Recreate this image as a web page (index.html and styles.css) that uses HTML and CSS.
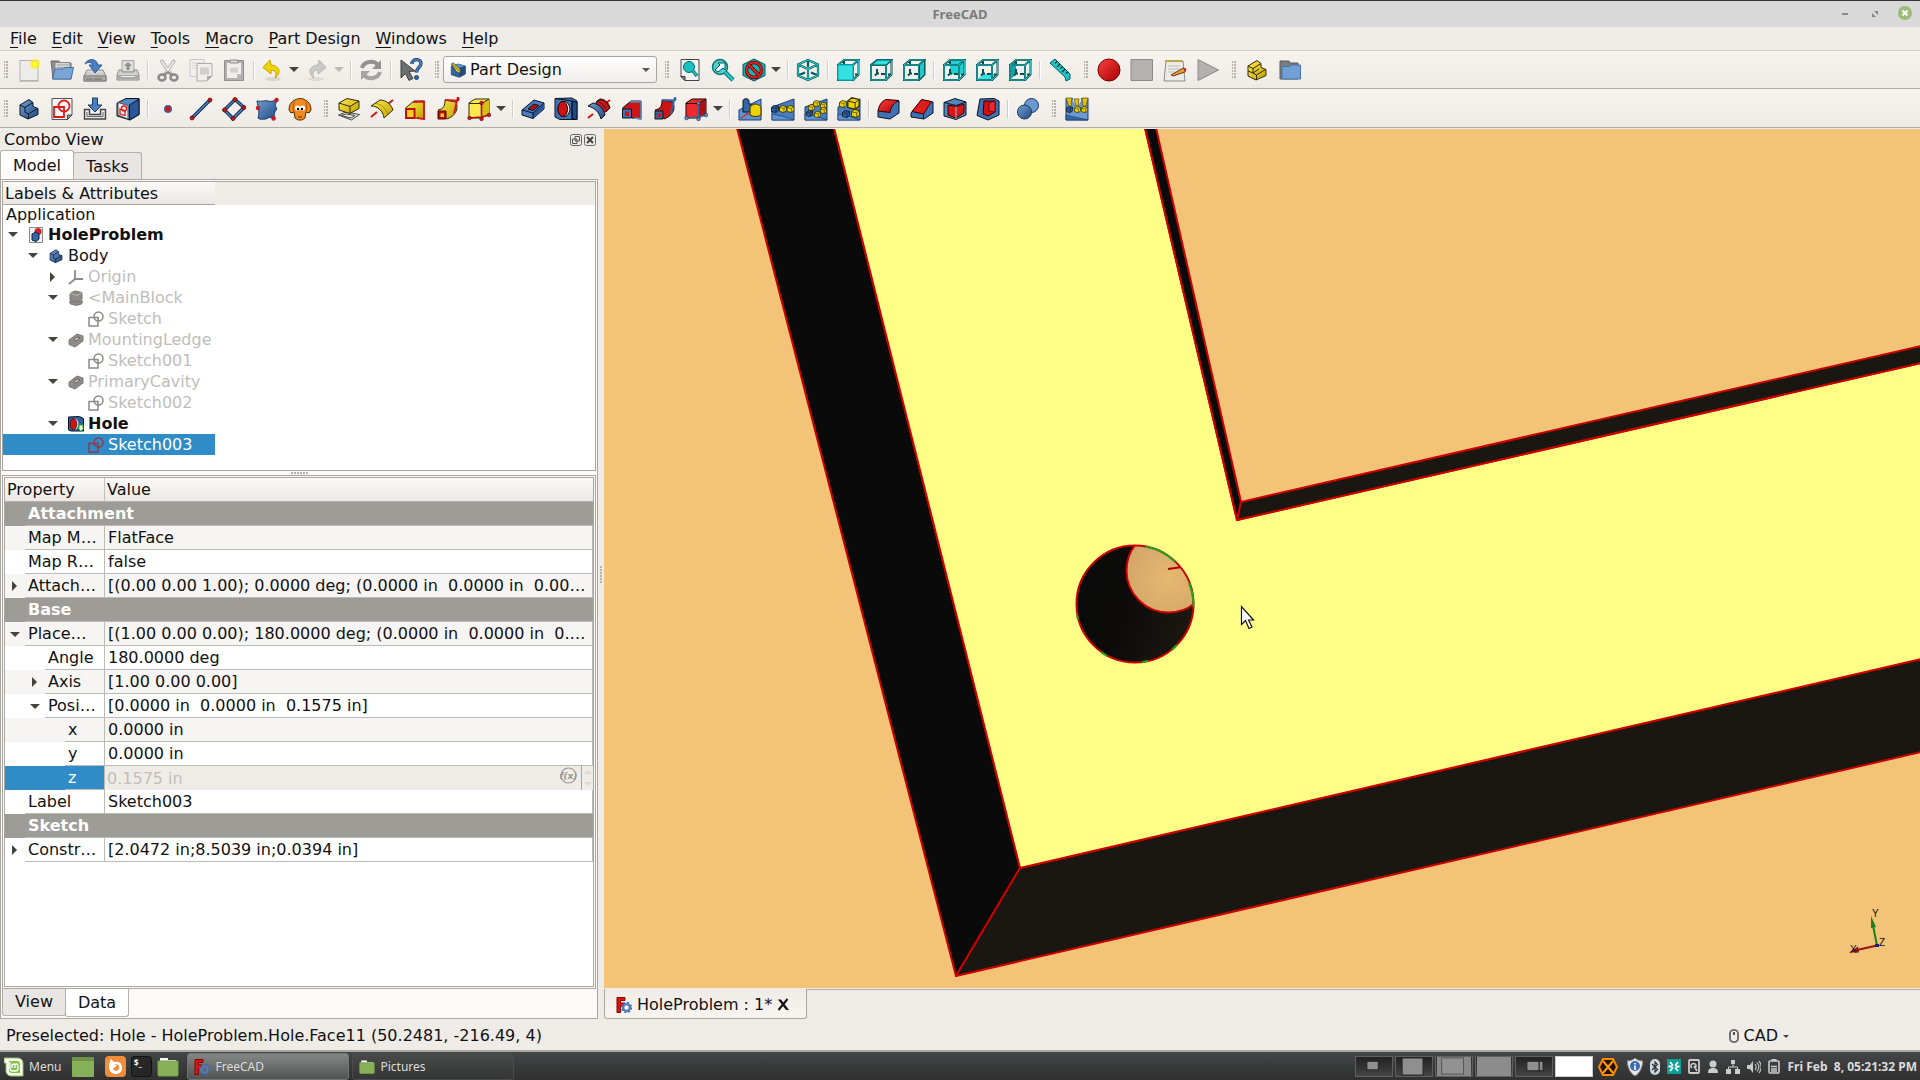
FILE: index.html
```html
<!DOCTYPE html>
<html lang="en">
<head>
<meta charset="utf-8">
<title>FreeCAD</title>
<link rel="stylesheet" href="styles.css">
</head>
<body>
<svg class="sprite" aria-hidden="true">
<defs>
<linearGradient id="gBlue" x1="0" y1="0" x2="1" y2="1"><stop offset="0" stop-color="#729fcf"/><stop offset="1" stop-color="#204a87"/></linearGradient>
<linearGradient id="gYel" x1="0" y1="0" x2="1" y2="1"><stop offset="0" stop-color="#fce94f"/><stop offset="1" stop-color="#c4a000"/></linearGradient>
<linearGradient id="gRed" x1="0" y1="0" x2="1" y2="1"><stop offset="0" stop-color="#ff4040"/><stop offset="1" stop-color="#a40000"/></linearGradient>
<linearGradient id="gGrey" x1="0" y1="0" x2="0" y2="1"><stop offset="0" stop-color="#e4e4e2"/><stop offset="1" stop-color="#9c9c9a"/></linearGradient>
<linearGradient id="gHole" x1="0" y1="0.4" x2="1" y2="0.7"><stop offset="0" stop-color="#0a0a0a"/><stop offset="0.4" stop-color="#0c0b0a"/><stop offset="1" stop-color="#1c1812"/></linearGradient>
<radialGradient id="gInner" cx="0.5" cy="0.6" r="0.6"><stop offset="0" stop-color="#e6b870"/><stop offset="1" stop-color="#d0a468"/></radialGradient>
<radialGradient id="gStar"><stop offset="0" stop-color="#fffbb0"/><stop offset="0.45" stop-color="#fff200"/><stop offset="1" stop-color="#fff200" stop-opacity="0"/></radialGradient>
</defs>

<symbol id="i-new" viewBox="0 0 24 24"><path d="M3 2.500h18v20H3z" fill="#ececea" stroke="#b4b3ae"/><path d="M2 23.500h20" stroke="#c8c4bc"/><circle cx="18" cy="6" r="6" fill="url(#gStar)"/></symbol>
<symbol id="i-open" viewBox="0 0 24 24"><path d="M1 3h8l1 2h11v16H3z" fill="#8c8c8a" stroke="#6d6d6b"/><path d="M5 4.500h15v9H5z" fill="#d8d8d6" stroke="#8a8a88"/><path d="M7 7h12M7 9.500h12" stroke="#a0a09e"/><path d="M5 11h8l2-1.500h8.500L21 21H2.500z" fill="#7aa5d6" stroke="#4070a8"/></symbol>
<symbol id="i-save" viewBox="0 0 24 24"><path d="M4 12h16l3 6v5H1v-5z" fill="url(#gGrey)" stroke="#8a8a88"/><path d="M1 18h22v5H1z" fill="#aaa9a5" stroke="#7d7d7a"/><path d="M3 21h7M12 20v2M14 20v2M16 20v2M18 20v2" stroke="#6a6a68"/><path d="M2 6C4 1 13-1 15 7h4l-7 8-6-8h3.500C9.500 4 5 3.500 2 6z" fill="#4b7fc0" stroke="#2c5a96"/></symbol>
<symbol id="i-print" viewBox="0 0 24 24"><path d="M6 2.500h12V14H6z" fill="#dededc" stroke="#a5a5a2"/><path d="M12 4l4 4h-2.500v4h-3V8H8z" fill="#8d8d8b"/><path d="M3 12h3v2h12v-2h3l2 5v5H1v-5z" fill="#d4d3d0" stroke="#8a8a88"/><path d="M1 17h22v4H1z" fill="#aaa9a6"/><path d="M5 18.500h14" stroke="#eee"/></symbol>
<symbol id="i-cut" viewBox="0 0 24 24" fill="none"><path d="M5 2l9 13 2 2M18.500 2L10 15l-2 2" stroke="#b5b4b1" stroke-width="3.500"/><path d="M5.500 3L15 16M18 3L9 16" stroke="#eeedeb" stroke-width="1.500"/><ellipse cx="6" cy="19.500" rx="3.500" ry="3" stroke="#8b8a88" stroke-width="2.500"/><ellipse cx="18" cy="19.500" rx="3.500" ry="3" stroke="#8b8a88" stroke-width="2.500"/><path d="M8 17l4-3 4 3" stroke="#8b8a88" stroke-width="2"/></symbol>
<symbol id="i-copy" viewBox="0 0 24 24"><path d="M1 1.500h14v17H1z" fill="#f1f0ee" stroke="#c9c8c5"/><path d="M3 5h10M3 7.500h10M3 10h5" stroke="#d6d5d2"/><path d="M8 5.500h15V18l-5 5H8z" fill="#efeeec" stroke="#aeada9"/><path d="M11 9.500h9v7h-9z" fill="#cfceca"/><path d="M23 18h-5v5z" fill="#aaa9a5"/></symbol>
<symbol id="i-paste" viewBox="0 0 24 24"><path d="M2.500 2.500h19v20h-19z" fill="#b1b0ac" stroke="#918f8c"/><path d="M5 5h14v11l-4 4H5z" fill="#f0efec"/><path d="M8 2h8v3H8z" fill="#dcdbd8" stroke="#8a8986"/><path d="M8 9.500h8v5H8z" fill="#d3d2cf"/><path d="M19 16h-4v4z" fill="#bbbab6"/></symbol>
<symbol id="i-undo" viewBox="0 0 24 24"><ellipse cx="13" cy="21" rx="8" ry="2" fill="#d9d5cd"/><path d="M10 2L3 9.500l8 6.500v-4c5 0 6 3 4 8 6-4 6-12-4-13z" fill="#edd400" stroke="#c4a000"/></symbol>
<symbol id="i-redo" viewBox="0 0 24 24"><ellipse cx="11" cy="21" rx="8" ry="2" fill="#dedad4"/><path d="M14 2l7 7.500-8 6.500v-4c-5 0-6 3-4 8-6-4-6-12 4-13z" fill="#cbcac6" stroke="#b5b4b0"/></symbol>
<symbol id="i-refresh" viewBox="0 0 24 24" fill="none"><path d="M3 10c2-7 12-8 16-3" stroke="#929190" stroke-width="4"/><path d="M22 2v9h-9z" fill="#929190"/><path d="M21 14c-2 7-12 8-16 3" stroke="#a4a3a0" stroke-width="4"/><path d="M2 22v-9h9z" fill="#a4a3a0"/></symbol>
<symbol id="i-what" viewBox="0 0 24 24"><path d="M2 2l14 11-6 .5 4 7-4 2-3.500-7L2 20z" fill="#6c6f70" stroke="#3d4041"/><path d="M13 6c0-6 9-5.500 9-.5 0 4-4.500 3.500-4.500 9" fill="none" stroke="#1f3f6d" stroke-width="3.400"/><path d="M13 6c0-6 9-5.500 9-.5 0 4-4.500 3.500-4.500 9" fill="none" stroke="#4c7fbf" stroke-width="1.800"/><circle cx="17.500" cy="19.500" r="2" fill="#3465a4" stroke="#1f3f6d"/></symbol>
<symbol id="i-pd" viewBox="0 0 24 24"><path d="M2 6l10-3 11 3v12l-9 5-12-4z" fill="#3465a4" stroke="#16335c"/><path d="M2 6l12 3 9-3-11-3z" fill="#5e8fc9"/><path d="M14 9l9-3v12l-9 5z" fill="#204a87"/><path d="M2 3l3-2 10 10 1 6-6-2z" fill="#e8d020" stroke="#333"/><path d="M3 2l11 12" stroke="#333" fill="none"/></symbol>

<symbol id="i-fitall" viewBox="0 0 24 24"><path d="M3 1.500h18v21H7l-4-4z" fill="#f1f1f0" stroke="#444"/><path d="M3 18.500h4v4z" fill="#999" stroke="#333"/><circle cx="11" cy="9" r="5.500" fill="#18c0c2" stroke="#06686a"/><path d="M15 13l4 5" stroke="#06686a" stroke-width="3.500"/><path d="M15 13l4 5" stroke="#20cfd1" stroke-width="1.500"/></symbol>
<symbol id="i-fitsel" viewBox="0 0 24 24"><circle cx="9" cy="9" r="7.500" fill="#5cc9ca" stroke="#06787a" stroke-width="1.500"/><path d="M14 14l8 8" stroke="#06686a" stroke-width="4.500"/><path d="M14 14l8 8" stroke="#20cfd1" stroke-width="2.400"/><path d="M4 12l5-5-2-2h7v7l-2-2-5 4z" fill="#e8ffff" stroke="#055"/></symbol>
<symbol id="i-style" viewBox="0 0 24 24"><path d="M1 6.500L12 1l11 5.500v11L12 23 1 17.500z" fill="#17b3b5" stroke="#055" /><circle cx="12" cy="12" r="7.500" fill="none" stroke="#500" stroke-width="3.400"/><circle cx="12" cy="12" r="7.500" fill="none" stroke="#e02020" stroke-width="2"/><path d="M7 7l10 10" stroke="#500" stroke-width="3.600"/><path d="M6.500 6.500l11 11" stroke="#e02020" stroke-width="2.200"/></symbol>
<symbol id="i-iso" viewBox="0 0 24 24" fill="none"><path d="M2 6.500L12 2l10 4.500v11L12 22 2 17.500zM2 6.500l10 4.500 10-4.500M12 11v11M12 2v7M2 17.500l7-3M22 17.500l-7-3" stroke="#065a5b" stroke-width="2.200"/><path d="M2 6.500L12 2l10 4.500v11L12 22 2 17.500zM2 6.500l10 4.500 10-4.500M12 11v11" stroke="#2fd5d7" stroke-width="1"/></symbol>
<symbol id="cube" viewBox="0 0 24 24" fill="none"><path d="M2 7h15v15H2zM2 7l6-5h14.500l-5.500 5M22.500 2v14.500L17 22M8 2v5M8 11v4.500l-2 2M12 16h4M19 16.500h3.500M8 15.500h2" stroke="#074f50" stroke-width="2"/><path d="M2 7h15v15H2zM2 7l6-5h14.500l-5.500 5M22.500 2v14.500L17 22" stroke="#2bc9cb" stroke-width="0.900"/></symbol>
<symbol id="i-front" viewBox="0 0 24 24"><use href="#cube"/><path d="M2 7h15v15H2z" fill="#34e0e2" stroke="#0aa"/></symbol>
<symbol id="i-top" viewBox="0 0 24 24"><use href="#cube"/><path d="M2.500 7l6-5h14L17 7z" fill="#34e0e2" stroke="#055"/></symbol>
<symbol id="i-right" viewBox="0 0 24 24"><use href="#cube"/><path d="M17.500 7l5-5v14.500l-5 5z" fill="#1fc9cb" stroke="#055"/></symbol>
<symbol id="i-rear" viewBox="0 0 24 24"><path d="M8 2.500h14v14H8z" fill="#1fd0d2"/><use href="#cube"/></symbol>
<symbol id="i-bottom" viewBox="0 0 24 24"><path d="M2 22l6-6h14.500L17 22z" fill="#34e0e2"/><use href="#cube"/></symbol>
<symbol id="i-left" viewBox="0 0 24 24"><path d="M2 7l6-5v14l-6 6z" fill="#12a5a7"/><use href="#cube"/></symbol>
<symbol id="i-measure" viewBox="0 0 24 24"><path d="M2 5l5-4 15 15v5l-4 2-1-4z" fill="#1fc4c6" stroke="#055a5b"/><path d="M9 3.500l-2 2M12 6l-3 3M14.500 8.500l-2 2M17 11l-3 3M20 13.500l-2 2" stroke="#033" stroke-width="1.200"/></symbol>
<symbol id="i-rec" viewBox="0 0 24 24"><circle cx="12" cy="12" r="11" fill="url(#gRed)" stroke="#6e0000"/></symbol>
<symbol id="i-stop" viewBox="0 0 24 24"><path d="M1 1.500h21.500v21H1z" fill="#b5b1ae" stroke="#8c8986"/></symbol>
<symbol id="i-edit" viewBox="0 0 24 24"><path d="M3 3h17l2 20H1z" fill="#ecebe8" stroke="#8d8b86"/><path d="M3 2v2M5.500 2v2M8 2v2M10.500 2v2M13 2v2M15.500 2v2M18 2v2" stroke="#b59a10" stroke-width="1.600"/><path d="M5 8h12M5 11h12M5 14h7" stroke="#bbb"/><path d="M8 17l12-7 3 1-1 3-12 4z" fill="#e09a3a" stroke="#6b4010"/><path d="M20 10l3 1-1 3z" fill="#d22"/></symbol>
<symbol id="i-play" viewBox="0 0 24 24"><path d="M2 1.500L22.500 12 2 22.500z" fill="#b5b1ae" stroke="#8c8986"/></symbol>
<symbol id="i-part" viewBox="0 0 24 24"><path d="M3 8l9-5.500 4 3v4l5 2v6L11 22l-8-4z" fill="url(#gYel)" stroke="#302b00"/><path d="M3 8l5 2.500 8-5M8 10.500v4.500l3.500 2 9-5.500M11.500 17v5M3 13l5 2 6-4" fill="none" stroke="#302b00"/></symbol>
<symbol id="i-group" viewBox="0 0 24 24"><path d="M2 3h9l1 2h8v16H2z" fill="#7b7d7c" stroke="#5a5b5a"/><path d="M4 8.500h7L13 7h9.500v14H4z" fill="#72a0d6" stroke="#4472aa"/></symbol>

<symbol id="i-body" viewBox="0 0 24 24"><path d="M3 8l9-5.500 4 3v4l5 2v6L11 22l-8-4z" fill="url(#gBlue)" stroke="#0b1521"/><path d="M3 8l5 2.500 8-5M8 10.500v4.500l3.500 2 9-5.500M11.500 17v5" fill="none" stroke="#0b1521"/></symbol>
<symbol id="i-sketch" viewBox="0 0 24 24"><path d="M2 1.500h20V18l-4.500 4.500H2z" fill="#f6f6f5" stroke="#555"/><path d="M22 18h-4.500v4.500z" fill="#999" stroke="#444"/><path d="M4 10h10v10H4z" fill="none" stroke="#e01b1b" stroke-width="1.800"/><circle cx="14" cy="9" r="5.500" fill="none" stroke="#e01b1b" stroke-width="1.800"/></symbol>
<symbol id="i-attach" viewBox="0 0 24 24"><path d="M1.500 12.500h5v5h11v-5h5V22h-21z" fill="#e8e8e8" stroke="#444" stroke-width="1.400"/><path d="M4 15v4.500h16V15" fill="none" stroke="#666"/><path d="M9.500 1h5v7H19l-7 7-7-7h4.500z" fill="#4b7fc0" stroke="#173a68"/></symbol>
<symbol id="i-map" viewBox="0 0 24 24"><path d="M1 6l9-4.500h13v16L14 23 1 19z" fill="#5286c4" stroke="#0b1521"/><path d="M13.500 8L23 2v15.500l-9.500 5.500z" fill="#2a579a" stroke="#0b1521"/><path d="M2 5.500l10 3V22L2 18z" fill="#eee" stroke="#555"/><path d="M4 12l5 1.500v5L4 17z" fill="none" stroke="#e01b1b" stroke-width="1.300"/><circle cx="8" cy="11.500" r="2.500" fill="none" stroke="#e01b1b" stroke-width="1.300"/></symbol>
<symbol id="i-point" viewBox="0 0 24 24"><circle cx="12" cy="12" r="4" fill="#3465a4"/><circle cx="12" cy="12" r="2.700" fill="#d01818"/></symbol>
<symbol id="i-line" viewBox="0 0 24 24"><path d="M3 21L21 3" stroke="#0b2545" stroke-width="3.400"/><path d="M3 21L21 3" stroke="#4d82c4" stroke-width="1.600"/><g fill="#d01818" stroke="#5c0000" stroke-width=".7"><circle cx="3" cy="21" r="2"/><circle cx="21" cy="3" r="2"/></g></symbol>
<symbol id="i-plane" viewBox="0 0 24 24"><path d="M2.500 13L13 2.500l9 8L11 21.500z" fill="none" stroke="#0b2545" stroke-width="3.400"/><path d="M2.500 13L13 2.500l9 8L11 21.500z" fill="none" stroke="#4d82c4" stroke-width="1.600"/><g fill="#d01818" stroke="#5c0000" stroke-width=".7"><circle cx="2.500" cy="13" r="2"/><circle cx="13" cy="2.500" r="2"/><circle cx="22" cy="10.500" r="2"/><circle cx="11" cy="21.500" r="2"/></g></symbol>
<symbol id="i-shape" viewBox="0 0 24 24"><path d="M2 4c5 1 8-1 11 0s5 0 9-1c-2 5-2 6 0 9-3 3-3 5-2 10-4-2-6-2-9 0-3 0-6 1-8-1 2-6 0-11-1-17z" fill="url(#gBlue)" stroke="#173a68"/><g fill="#d01818"><circle cx="21.500" cy="3" r="2.200"/><circle cx="3" cy="11" r="2.200"/><circle cx="18.500" cy="21.500" r="2.200"/></g></symbol>
<symbol id="i-clone" viewBox="0 0 24 24"><path d="M7 3c3-2 8-2 10 0 3 1 6 4 6 10l-2 3-3-1-1 6-3 2h-4l-3-2-1-6-3 1-2-3C1 7 4 4 7 3z" fill="#ef8a1f" stroke="#5a2c00"/><path d="M6 5c-1 3-1 7 0 10M18 5c1 3 1 7 0 10" fill="none" stroke="#a85508"/><circle cx="9.500" cy="11" r="2.600" fill="#fff"/><circle cx="14.500" cy="11" r="2.600" fill="#fff"/><circle cx="10" cy="12" r="1.200"/><circle cx="14" cy="12" r="1.200"/><path d="M10 20h4" stroke="#5a2c00"/></symbol>

<symbol id="i-pad" viewBox="0 0 24 24"><path d="M1.500 18L9 15l13.500 2.500-8 5.500z" fill="#e8e8e6" stroke="#444"/><path d="M4 18.500l5-1.500 9 1.500-4 2.500z" fill="none" stroke="#444"/><path d="M2 6l8-4.500L22 4v7.500l-9 5L2 13z" fill="url(#gYel)" stroke="#302b00"/><path d="M2 6l11 3.500L22 4M13 9.500v7" fill="none" stroke="#302b00"/></symbol>
<symbol id="i-rev" viewBox="0 0 24 24"><path d="M1 20l6-5M18 7l5-4" stroke="#d01818" stroke-width="2"/><path d="M1 9l9-6c6 0 11 4 13 10l-9 8C13 14 8 9 1 9z" fill="url(#gYel)" stroke="#302b00"/><path d="M5 6.500c6 0 11 5 13 11" fill="none" stroke="#7a6a00" stroke-width=".6"/></symbol>
<symbol id="i-loft" viewBox="0 0 24 24"><path d="M2.500 11L11 4h10v18l-9-1z" fill="url(#gYel)" stroke="#302b00"/><path d="M10 5l11-.500V22l-7-1" fill="none" stroke="#d01818" stroke-width="1.800"/><path d="M3 12h8.500v9H3z" fill="#f5d020" stroke="#c01010" stroke-width="2"/></symbol>
<symbol id="i-sweep" viewBox="0 0 24 24"><path d="M2 13C8 12 9 8 9 3l11 2c3 8-1 14-9 17z" fill="url(#gYel)" stroke="#302b00"/><path d="M9 3l12 .5-3 13" fill="none" stroke="#d01818" stroke-width="1.800"/><path d="M2 14h8v8H2z" fill="#b01010" stroke="#600"/><path d="M4.500 16.500h3.500V20H4.500z" fill="#f5d020"/><ellipse cx="22" cy="2" rx="1.500" ry="2.300" fill="#c01010"/></symbol>
<symbol id="i-cubeY" viewBox="0 0 24 24"><path d="M2 6l6-4h14v14l-7 5H2z" fill="#fce94f" stroke="#302b00"/><path d="M15 7l7-5v14l-7 5z" fill="#d8bd14"/><path d="M2 6.500h12.500L22 2" fill="none" stroke="#302b00"/><path d="M14.500 6v13M2 21l12.500-1 8-2" fill="none" stroke="#b01010" stroke-width="1.600"/><g fill="#d01818" stroke="#500" stroke-width=".6"><circle cx="14.500" cy="6" r="1.800"/><circle cx="2.500" cy="21" r="1.800"/><circle cx="14.500" cy="22" r="1.800"/><circle cx="22" cy="18" r="1.800"/></g></symbol>
<symbol id="i-pocket" viewBox="0 0 24 24"><path d="M1 13L13 3l10 3v6L12 21.500 1 18z" fill="#4a7dbd" stroke="#0b1521"/><path d="M12 16L23 6v6l-11 9.500z" fill="#2a579a"/><path d="M1 13l11 3L23 6M12 16v5.500" fill="none" stroke="#0b1521"/><path d="M7 12l6-5 5 1.500-6 5z" fill="#b01010" stroke="#0b1521"/></symbol>
<symbol id="i-hole" viewBox="0 0 24 24"><path d="M1 1.500l17-.5 5 3v18.500H6L1 20z" fill="#3f72b4" stroke="#0b1521"/><path d="M18 4l5 1v17.500l-5-1z" fill="#204a87" stroke="#0b1521"/><path d="M1 1.500L18 4v17.500" fill="none" stroke="#0b1521"/><ellipse cx="10" cy="12" rx="6" ry="7.500" fill="#e8e8e8" stroke="#200"/><ellipse cx="8.700" cy="12" rx="4.800" ry="7.500" fill="#cc1414" stroke="#200"/></symbol>
<symbol id="i-groove" viewBox="0 0 24 24"><path d="M1 21l5-4M19 6l4-3" stroke="#d01818" stroke-width="2"/><path d="M9 5l4-3c5 0 9 4 10 9l-4 4c-4 0-9-4-10-10z" fill="#cc1414" stroke="#400"/><path d="M1 9l5-3c6 1 11 6 12 12l-4 4C12 15 8 11 1 9z" fill="url(#gBlue)" stroke="#0b1521"/><path d="M10 4l3-1.500c5 1 8 4 9.500 9L20 14c-2-5-5-8-10-10z" fill="none" stroke="#0b1521" stroke-width=".7"/></symbol>
<symbol id="i-loftR" viewBox="0 0 24 24"><path d="M2.500 11L11 4h10v18l-9-1z" fill="#cc1414" stroke="#111"/><path d="M10 5l11-.500V22l-7-1" fill="none" stroke="#5e8fc9" stroke-width="1.500"/><path d="M2.500 12H11.500v9H2.500z" fill="#3f72b4" stroke="#0b1521"/><path d="M5 14.500h4v4.500H5z" fill="#cc1414"/></symbol>
<symbol id="i-sweepR" viewBox="0 0 24 24"><path d="M2 13C8 12 9 8 9 3l11 2c3 8-1 14-9 17z" fill="#cc1414" stroke="#111"/><path d="M9 3l12 .5-3 13" fill="none" stroke="#3465a4" stroke-width="2"/><path d="M2 14h8v8H2z" fill="#3465a4" stroke="#0b1521"/><path d="M4.500 16.500h3.500V20H4.500z" fill="#cc1414"/><ellipse cx="22" cy="2" rx="1.500" ry="2" fill="#3465a4"/></symbol>
<symbol id="i-cubeR" viewBox="0 0 24 24"><path d="M2 6l6-4h14v14l-7 5H2z" fill="#ef2929" stroke="#200"/><path d="M15 7l7-5v14l-7 5z" fill="#b01010"/><path d="M2 6.500h12.500L22 2" fill="none" stroke="#200"/><path d="M14.500 6v13M2 21l12.500-1 8-2" fill="none" stroke="#3465a4" stroke-width="1.600"/><g fill="#5e8fc9" stroke="#0b2545" stroke-width=".6"><circle cx="14.500" cy="6" r="1.800"/><circle cx="2.500" cy="21" r="1.800"/><circle cx="14.500" cy="22" r="1.800"/><circle cx="22" cy="18" r="1.800"/></g></symbol>

<symbol id="yb" viewBox="0 0 8 8"><path d="M.5 2.500L3 .5l4.500 1v4L5 7.500l-4.500-1z" fill="#edd400" stroke="#302b00" stroke-width=".8"/><path d="M.5 2.500L5 3.500l2.500-2M5 3.500v4" fill="none" stroke="#302b00" stroke-width=".6"/></symbol>
<symbol id="bb" viewBox="0 0 8 8"><path d="M.5 2.500L3 .5l4.500 1v4L5 7.500l-4.500-1z" fill="#2f5f9f" stroke="#0b1521" stroke-width=".8"/><path d="M.5 2.500L5 3.500l2.500-2M5 3.500v4" fill="none" stroke="#0b1521" stroke-width=".6"/></symbol>
<symbol id="ground" viewBox="0 0 24 24"><path d="M1 10l22-8v21H1z" fill="#4a7dbd" stroke="#1a3f70"/><path d="M1 17l10 2 12 4H1z" fill="#5f93d2" stroke="#1a3f70" stroke-width=".7"/></symbol>
<symbol id="i-mirror" viewBox="0 0 24 24"><path d="M1 13l22-11v21H1z" fill="#5f93d2" stroke="#1a3f70"/><path d="M5 4c0-3 6-3 6 0v3h2v8H5z" fill="#3465a4" stroke="#0b1521"/><path d="M12 11c0-2 3-4 5.500-4s5.500 2 5.500 4v7c-2 2-9 2-11 0z" fill="#edd400" stroke="#302b00"/><path d="M3 21l9-6" stroke="#d01818" stroke-width="1.500" stroke-dasharray="2 1"/></symbol>
<symbol id="i-linear" viewBox="0 0 24 24"><use href="#ground"/><use href="#bb" x="0" y="8" width="8" height="8"/><use href="#yb" x="8" y="8" width="8" height="8"/><use href="#yb" x="15.500" y="8" width="8" height="8"/></symbol>
<symbol id="i-polar" viewBox="0 0 24 24"><use href="#ground"/><use href="#bb" x="2" y="13" width="7" height="7"/><use href="#yb" x="4" y="7" width="7" height="7"/><use href="#yb" x="9" y="3" width="7" height="7"/><use href="#yb" x="16" y="5" width="7" height="7"/><use href="#yb" x="16" y="10" width="7" height="7"/><use href="#yb" x="10" y="14" width="7" height="7"/></symbol>
<symbol id="i-multi" viewBox="0 0 24 24"><use href="#ground"/><use href="#yb" x="10" y="0" width="13" height="13"/><use href="#yb" x="2" y="3" width="8" height="8"/><use href="#bb" x="5" y="13" width="8" height="8"/><use href="#yb" x="14" y="12" width="9" height="9"/></symbol>
<symbol id="i-fillet" viewBox="0 0 24 24"><path d="M1 14L9 3l13 1v12l-9 6-12-2z" fill="#3f72b4" stroke="#0b1521"/><path d="M1 14C2 8 5 4 9 2.500l13 1c-5 2-8 6-9 12z" fill="url(#gRed)" stroke="#300"/></symbol>
<symbol id="i-chamfer" viewBox="0 0 24 24"><path d="M1 16L12 3l11 2v11l-9 6-13-2z" fill="#3f72b4" stroke="#0b1521"/><path d="M2 14.500L11.500 2.500l10 2L13.500 17z" fill="#e01c1c" stroke="#300"/><path d="M13.500 17v5" stroke="#0b1521"/></symbol>
<symbol id="i-draft" viewBox="0 0 24 24"><path d="M1 5.500L12 1.500l11 3.500v13L13 22.500 1 19z" fill="#5286c4" stroke="#0b1521"/><path d="M1 5.500L13 8.500 23 5" fill="none" stroke="#0b1521"/><path d="M5 8l8 1.500L21 7v9l-8 5-8-3z" fill="#d81818" stroke="#300"/><path d="M13 9.500V22" stroke="#9bc"/></symbol>
<symbol id="i-thick" viewBox="0 0 24 24"><path d="M4 2l14-.5 5 2.500v14l-11 5L1 18.500z" fill="#3f72b4" stroke="#0b1521"/><path d="M8 4h11v11l-7 4-5-2z" fill="#cc1414" stroke="#300"/><path d="M13 6l6-2v11l-6-1z" fill="#ef2929" stroke="#300" stroke-width=".6"/></symbol>
<symbol id="i-bool" viewBox="0 0 24 24"><circle cx="15.500" cy="8.500" r="7" fill="#6b98d0" stroke="#1a3558"/><circle cx="8.500" cy="15" r="7" fill="url(#gBlue)" stroke="#1a3558"/></symbol>
<symbol id="i-sprocket" viewBox="0 0 24 24"><path d="M1 1.500h22v21.500H1z" fill="#6b98d0" stroke="#1a3f70"/><path d="M8 1h8v3l-4 6-4-6z" fill="#e4ecf4"/><path d="M1 18l22 5H1z" fill="#3465a4" stroke="#1a3f70" stroke-width=".7"/><path d="M1 1h6l-1 5 1 3H4zM9 2h5l-1 7h-2zM17 1h6l-2 8h-3z" fill="#e8c010" stroke="#5a4a00" stroke-width=".7"/><use href="#bb" x="1" y="9" width="7" height="7"/><use href="#yb" x="9" y="9" width="7" height="7"/><use href="#yb" x="16" y="9" width="7" height="7"/></symbol>

<symbol id="i-doc" viewBox="0 0 16 16"><path d="M1.500.5h13v15h-13z" fill="#f2f2f2" stroke="#888"/><circle cx="10" cy="4.500" r="3.500" fill="#d81e1e"/><path d="M4 7l4-2 3 2v5l-3 2.500L4 13z" fill="#3465a4" stroke="#0b2545"/></symbol>
<symbol id="i-origin" viewBox="0 0 16 16"><path d="M7 1v9l-6 5M7 10h8" fill="none" stroke="#8d8c8a" stroke-width="1.800"/></symbol>
<symbol id="i-padG" viewBox="0 0 16 16"><path d="M1.500 11.500l13-.5-1 3-5 1.500-6-1.500z" fill="#8a8987" stroke="#777"/><path d="M2 3.500l5-2.500 7 1.500v7l-5 2.500-7-2z" fill="#8d8c8a" stroke="#777"/><path d="M2 3.500L9 5.500l5-3" fill="none" stroke="#b5b4b2"/></symbol>
<symbol id="i-pocketG" viewBox="0 0 16 16"><path d="M1 8l8-6 6 2v5l-8 6-6-2.500z" fill="#8d8c8a" stroke="#7c7b79"/><path d="M6 7.500l3-2.500 3 1-4 3z" fill="#c9c8c6" stroke="#666"/></symbol>
<symbol id="i-skG" viewBox="0 0 16 16" fill="none" stroke="currentColor" stroke-width="1.500"><path d="M1 6.500h9v8.500H1z"/><circle cx="10.500" cy="5.500" r="4.500"/></symbol>
<symbol id="i-holeT" viewBox="0 0 16 16"><path d="M.5 1l11-.5 4 2V15H3L.5 14z" fill="#2f5f9f" stroke="#0b1521"/><ellipse cx="6.500" cy="8" rx="4" ry="5.500" fill="#ddd"/><ellipse cx="5.500" cy="8" rx="3.300" ry="5.500" fill="#cc1414" stroke="#200" stroke-width=".6"/><path d="M11 9h4v3h1l-3 3.500L10 12h1z" fill="#fff" stroke="#0b0"/></symbol>
<symbol id="i-fc" viewBox="0 0 16 16"><path d="M1 .5h8v3H4.500V6H8v3H4.500v6.500H1z" fill="#d81414" stroke="#800"/><circle cx="10.500" cy="10.500" r="3.400" fill="none" stroke="#4d7dbb" stroke-width="2.400"/><circle cx="10.500" cy="10.500" r="5" fill="none" stroke="#3b69a5" stroke-width="1.400" stroke-dasharray="2 1.930"/></symbol>
<symbol id="i-folder" viewBox="0 0 22 20"><path d="M3 1h8v2h8v4H3z" fill="#fff"/><path d="M1 4h20v14a1 1 0 0 1-1 1H2a1 1 0 0 1-1-1z" fill="#87b158" stroke="#78a04c"/></symbol>
</svg>

<div class="window">
  <header class="titlebar">
    <h1 class="title">FreeCAD</h1>
    <div class="winctl">
      <button aria-label="Minimize"><svg width="13" height="13" viewBox="0 0 13 13"><path d="M4 6h6v2H4z" fill="#8a8a8a"/></svg></button>
      <button aria-label="Restore"><svg width="13" height="13" viewBox="0 0 13 13"><path d="M6 4h4v4zM4 6v4h4z" fill="#858585"/></svg></button>
      <button aria-label="Close"><svg width="14" height="14" viewBox="0 0 14 14"><circle cx="7" cy="7" r="7" fill="#9dba78"/><path d="M4.500 4.500l5 5M9.500 4.500l-5 5" stroke="#fff" stroke-width="2"/></svg></button>
    </div>
  </header>

  <nav class="menubar" aria-label="Main menu">
    <button><u>F</u>ile</button><button><u>E</u>dit</button><button><u>V</u>iew</button><button><u>T</u>ools</button><button><u>M</u>acro</button><button><u>P</u>art Design</button><button><u>W</u>indows</button><button><u>H</u>elp</button>
  </nav>

  <div class="toolrow">
    <div class="toolbar">
      <i class="handle"></i>
      <button class="tool" aria-label="New"><svg><use href="#i-new"/></svg></button>
      <button class="tool" aria-label="Open"><svg><use href="#i-open"/></svg></button>
      <button class="tool" aria-label="Save"><svg><use href="#i-save"/></svg></button>
      <button class="tool" aria-label="Print"><svg><use href="#i-print"/></svg></button>
      <i class="sep"></i>
      <button class="tool" aria-label="Cut" disabled><svg><use href="#i-cut"/></svg></button>
      <button class="tool" aria-label="Copy" disabled><svg><use href="#i-copy"/></svg></button>
      <button class="tool" aria-label="Paste" disabled><svg><use href="#i-paste"/></svg></button>
      <i class="sep"></i>
      <button class="tool drop" aria-label="Undo"><svg><use href="#i-undo"/></svg><i class="arrow"></i></button>
      <button class="tool drop" aria-label="Redo" disabled><svg><use href="#i-redo"/></svg><i class="arrow"></i></button>
      <i class="sep"></i>
      <button class="tool" aria-label="Refresh" disabled><svg><use href="#i-refresh"/></svg></button>
      <i class="sep"></i>
      <button class="tool" aria-label="What's this?"><svg><use href="#i-what"/></svg></button>
    </div>
    <div class="toolbar">
      <i class="handle"></i>
      <div class="combo">
        <svg class="combo-icon"><use href="#i-pd"/></svg>
        <select aria-label="Workbench"><option>Part Design</option></select>
        <i class="arrow"></i>
      </div>
    </div>
    <div class="toolbar">
      <i class="handle"></i>
      <button class="tool" aria-label="Fit all"><svg><use href="#i-fitall"/></svg></button>
      <button class="tool" aria-label="Fit selection"><svg><use href="#i-fitsel"/></svg></button>
      <button class="tool drop" aria-label="Draw style"><svg><use href="#i-style"/></svg><i class="arrow"></i></button>
      <i class="sep"></i>
      <button class="tool" aria-label="Isometric"><svg><use href="#i-iso"/></svg></button>
      <i class="sep"></i>
      <button class="tool" aria-label="Front"><svg><use href="#i-front"/></svg></button>
      <button class="tool" aria-label="Top"><svg><use href="#i-top"/></svg></button>
      <button class="tool" aria-label="Right"><svg><use href="#i-right"/></svg></button>
      <i class="sep"></i>
      <button class="tool" aria-label="Rear"><svg><use href="#i-rear"/></svg></button>
      <button class="tool" aria-label="Bottom"><svg><use href="#i-bottom"/></svg></button>
      <button class="tool" aria-label="Left"><svg><use href="#i-left"/></svg></button>
      <i class="sep"></i>
      <button class="tool" aria-label="Measure"><svg><use href="#i-measure"/></svg></button>
    </div>
    <div class="toolbar">
      <i class="handle"></i>
      <button class="tool" aria-label="Record macro"><svg><use href="#i-rec"/></svg></button>
      <button class="tool" aria-label="Stop macro" disabled><svg><use href="#i-stop"/></svg></button>
      <button class="tool" aria-label="Macros"><svg><use href="#i-edit"/></svg></button>
      <button class="tool" aria-label="Run macro" disabled><svg><use href="#i-play"/></svg></button>
    </div>
    <div class="toolbar">
      <i class="handle"></i>
      <button class="tool" aria-label="Create part"><svg><use href="#i-part"/></svg></button>
      <button class="tool" aria-label="Create group"><svg><use href="#i-group"/></svg></button>
    </div>
  </div>

  <div class="toolrow second">
    <div class="toolbar">
      <i class="handle"></i>
      <button class="tool" aria-label="Create body"><svg><use href="#i-body"/></svg></button>
      <button class="tool" aria-label="Create sketch"><svg><use href="#i-sketch"/></svg></button>
      <button class="tool" aria-label="Edit sketch"><svg><use href="#i-attach"/></svg></button>
      <button class="tool" aria-label="Map sketch to face"><svg><use href="#i-map"/></svg></button>
      <i class="sep"></i>
      <button class="tool" aria-label="Datum point"><svg><use href="#i-point"/></svg></button>
      <button class="tool" aria-label="Datum line"><svg><use href="#i-line"/></svg></button>
      <button class="tool" aria-label="Datum plane"><svg><use href="#i-plane"/></svg></button>
      <button class="tool" aria-label="Shape binder"><svg><use href="#i-shape"/></svg></button>
      <button class="tool" aria-label="Clone"><svg><use href="#i-clone"/></svg></button>
    </div>
    <div class="toolbar">
      <i class="handle"></i>
      <button class="tool" aria-label="Pad"><svg><use href="#i-pad"/></svg></button>
      <button class="tool" aria-label="Revolution"><svg><use href="#i-rev"/></svg></button>
      <button class="tool" aria-label="Additive loft"><svg><use href="#i-loft"/></svg></button>
      <button class="tool" aria-label="Additive pipe"><svg><use href="#i-sweep"/></svg></button>
      <button class="tool drop" aria-label="Additive primitive"><svg><use href="#i-cubeY"/></svg><i class="arrow"></i></button>
      <i class="sep"></i>
      <button class="tool" aria-label="Pocket"><svg><use href="#i-pocket"/></svg></button>
      <button class="tool" aria-label="Hole"><svg><use href="#i-hole"/></svg></button>
      <button class="tool" aria-label="Groove"><svg><use href="#i-groove"/></svg></button>
      <button class="tool" aria-label="Subtractive loft"><svg><use href="#i-loftR"/></svg></button>
      <button class="tool" aria-label="Subtractive pipe"><svg><use href="#i-sweepR"/></svg></button>
      <button class="tool drop" aria-label="Subtractive primitive"><svg><use href="#i-cubeR"/></svg><i class="arrow"></i></button>
      <i class="sep"></i>
      <button class="tool" aria-label="Mirrored"><svg><use href="#i-mirror"/></svg></button>
      <button class="tool" aria-label="Linear pattern"><svg><use href="#i-linear"/></svg></button>
      <button class="tool" aria-label="Polar pattern"><svg><use href="#i-polar"/></svg></button>
      <button class="tool" aria-label="MultiTransform"><svg><use href="#i-multi"/></svg></button>
      <i class="sep"></i>
      <button class="tool" aria-label="Fillet"><svg><use href="#i-fillet"/></svg></button>
      <button class="tool" aria-label="Chamfer"><svg><use href="#i-chamfer"/></svg></button>
      <button class="tool" aria-label="Draft"><svg><use href="#i-draft"/></svg></button>
      <button class="tool" aria-label="Thickness"><svg><use href="#i-thick"/></svg></button>
      <i class="sep"></i>
      <button class="tool" aria-label="Boolean"><svg><use href="#i-bool"/></svg></button>
    </div>
    <div class="toolbar">
      <i class="handle"></i>
      <button class="tool" aria-label="Sprocket"><svg><use href="#i-sprocket"/></svg></button>
    </div>
  </div>

  <main class="work">
    <aside class="dock">
      <div class="dock-title">
        <h2>Combo View</h2>
        <button aria-label="Float"><svg width="12" height="12" viewBox="0 0 12 12"><rect x=".5" y=".5" width="11" height="11" rx="2" fill="none" stroke="#666"/><path d="M5 2.500h4.500V7H5zM2.500 5H7v4.500H2.500z" fill="none" stroke="#555"/></svg></button>
        <button aria-label="Close panel"><svg width="12" height="12" viewBox="0 0 12 12"><rect x=".5" y=".5" width="11" height="11" rx="2" fill="none" stroke="#666"/><path d="M3 3l6 6M9 3L3 9" stroke="#444" stroke-width="2"/></svg></button>
      </div>
      <div class="tabs top" role="tablist"><button class="tab on" role="tab">Model</button><button class="tab" role="tab">Tasks</button></div>
      <div class="pane">
        <section class="tree">
          <div class="tree-head"><span>Labels &amp; Attributes</span></div>
          <ul>
            <li class="root">Application</li>
            <li class="l0 strong"><i class="tw open"></i><svg><use href="#i-doc"/></svg>HoleProblem</li>
            <li class="l1"><i class="tw open"></i><svg><use href="#i-body"/></svg>Body</li>
            <li class="l2 dim"><i class="tw"></i><svg><use href="#i-origin"/></svg>Origin</li>
            <li class="l2 dim"><i class="tw open"></i><svg><use href="#i-padG"/></svg>&lt;MainBlock</li>
            <li class="l3 dim"><i class="tw none"></i><svg><use href="#i-skG"/></svg>Sketch</li>
            <li class="l2 dim"><i class="tw open"></i><svg><use href="#i-pocketG"/></svg>MountingLedge</li>
            <li class="l3 dim"><i class="tw none"></i><svg><use href="#i-skG"/></svg>Sketch001</li>
            <li class="l2 dim"><i class="tw open"></i><svg><use href="#i-pocketG"/></svg>PrimaryCavity</li>
            <li class="l3 dim"><i class="tw none"></i><svg><use href="#i-skG"/></svg>Sketch002</li>
            <li class="l2 strong"><i class="tw open"></i><svg><use href="#i-holeT"/></svg>Hole</li>
            <li class="l3 selected"><i class="tw none"></i><svg><use href="#i-skG"/></svg>Sketch003</li>
          </ul>
        </section>
        <div class="hsplit"></div>
        <section class="props">
          <div class="props-box">
            <table>
              <colgroup><col class="c1"><col></colgroup>
              <thead><tr><th>Property</th><th>Value</th></tr></thead>
              <tbody>
                <tr class="group"><th colspan="2" class="p0"><span>Attachment</span></th></tr>
                <tr class="alt"><th class="p0"><span>Map M…</span></th><td>FlatFace</td></tr>
                <tr><th class="p0"><span>Map R…</span></th><td>false</td></tr>
                <tr class="alt"><th class="p0"><i class="tw"></i><span>Attach…</span></th><td>[(0.00 0.00 1.00); 0.0000 deg; (0.0000 in  0.0000 in  0.00…</td></tr>
                <tr class="group"><th colspan="2" class="p0"><span>Base</span></th></tr>
                <tr class="alt"><th class="p0"><i class="tw open"></i><span>Place…</span></th><td>[(1.00 0.00 0.00); 180.0000 deg; (0.0000 in  0.0000 in  0.…</td></tr>
                <tr><th class="p1"><span>Angle</span></th><td>180.0000 deg</td></tr>
                <tr class="alt"><th class="p1"><i class="tw"></i><span>Axis</span></th><td>[1.00 0.00 0.00]</td></tr>
                <tr><th class="p1"><i class="tw open"></i><span>Posi…</span></th><td>[0.0000 in  0.0000 in  0.1575 in]</td></tr>
                <tr class="alt"><th class="p2"><span>x</span></th><td>0.0000 in</td></tr>
                <tr><th class="p2"><span>y</span></th><td>0.0000 in</td></tr>
                <tr class="picked"><th class="p2"><label for="zval">z</label></th><td><div class="spin"><input id="zval" value="0.1575 in" disabled><svg width="17" height="17" viewBox="0 0 17 17"><circle cx="8.500" cy="8.500" r="7.500" fill="none" stroke="#9b9894" stroke-width="1.200"/><text x="8.500" y="12" text-anchor="middle" font-size="9" font-style="italic" font-weight="bold" fill="#9b9894">f(x)</text></svg><span class="updown"><i></i><i></i></span></div></td></tr>
                <tr><th class="p0"><span>Label</span></th><td>Sketch003</td></tr>
                <tr class="group"><th colspan="2" class="p0"><span>Sketch</span></th></tr>
                <tr><th class="p0"><i class="tw"></i><span>Constr…</span></th><td>[2.0472 in;8.5039 in;0.0394 in]</td></tr>
              </tbody>
            </table>
          </div>
        </section>
        <div class="tabs bottom" role="tablist"><button class="tab" role="tab">View</button><button class="tab on" role="tab">Data</button></div>
      </div>
    </aside>
    <div class="vsplit"></div>
    <section class="mdi">
      <svg class="scene" viewBox="604 129 1316 859" preserveAspectRatio="xMidYMid slice" role="img" aria-label="3D view">
        <path d="M604 129h1316v859H604z" fill="#f3c377"/>
        <g stroke="#cc0000" stroke-width="2" stroke-linejoin="round">
          <path d="M737 128L956 976 1020 868 834 128z" fill="#0a0a0a"/>
          <path d="M956 976L1921 752v-93L1020 868z" fill="#1a1712"/>
          <path d="M834 128l186 740 901-209V363L1237 520 1145 128z" fill="#ffff88"/>
          <path d="M1145 128l92 392 4-18-85-374z" fill="#0a0a0a"/>
          <path d="M1237 520l684-157v-17l-680 156z" fill="#1a1712"/>
        </g>
        <clipPath id="holeClip"><circle cx="1135" cy="604" r="58.500"/></clipPath>
        <circle cx="1135" cy="604" r="58.500" fill="url(#gHole)"/>
        <g clip-path="url(#holeClip)">
          <circle cx="1168.500" cy="570.500" r="42" fill="url(#gInner)" stroke="#cc0000" stroke-width="2"/>
          <path d="M1168 569l14-2" stroke="#b00000" stroke-width="2"/>
        </g>
        <circle cx="1135" cy="604" r="58.500" fill="none" stroke="#cc0000" stroke-width="2"/>
        <g fill="none" stroke="#22a31f" stroke-width="2"><path d="M1145 546.500a58.500 58.500 0 0 1 30 15M1189 583a58.500 58.500 0 0 1 4.500 24M1077 615l1 5M1101 652l6 4M1142 662l6-1M1172 650l5-5"/></g>
        <path d="M1241.500 606.500v18l4-4 3.500 8 3-1.500-3.500-7h5z" fill="#fff" stroke="#111" stroke-width="1.200"/>
        <g fill="none" stroke-width="2"><path d="M1877 945.500l-4-20" stroke="#1d7f1d"/><path d="M1877 945.500l-20 4.500" stroke="#8b1a1a"/></g>
        <path d="M1871 916l5 11-5 1z" fill="#1d7f1d"/><path d="M1849 952.500l9-6 1 6z" fill="#8b1a1a"/><path d="M1875 944h4v3h-4z" fill="#1d1d8b"/>
        <g class="axis"><text x="1872" y="917">Y</text><text x="1879" y="946">Z</text><text x="1850" y="953">X</text></g>
      </svg>
      <div class="mdi-tabs" role="tablist">
        <button class="mdi-tab" role="tab"><svg width="16" height="16"><use href="#i-fc"/></svg><span>HoleProblem : 1*</span><svg width="13" height="13" viewBox="0 0 13 13"><path d="M1 1.500h3L12 12H9z" fill="#111"/><path d="M10.500 1L1.500 12" stroke="#111" stroke-width="2"/></svg></button>
      </div>
    </section>
  </main>

  <footer class="status">
    <span>Preselected: Hole - HoleProblem.Hole.Face11 (50.2481, -216.49, 4)</span>
    <button class="nav"><svg width="10" height="14" viewBox="0 0 10 14"><rect x="1" y="1" width="8" height="12" rx="3.500" fill="none" stroke="#555" stroke-width="1.600"/><path d="M4 3h2v3H4z" fill="#555"/></svg>CAD<i class="arrow"></i></button>
  </footer>
</div>

<nav class="taskbar" aria-label="Desktop panel">
  <button class="mint"><svg width="20" height="20" viewBox="0 0 20 20"><path d="M0 1h13c4 0 6 2 6 6v12H8c-4 0-6-2-6-6V6H0z" fill="#f4f8ee" stroke="#9bbd6a"/><path d="M3 4h10c2 0 3 1 3 3v9H8c-2 0-3-1-3-3V4z" fill="#87c04a"/><path d="M6 5v6c0 2 1 3 3 3h2c2 0 3-1 3-3V8.500a1.500 1.500 0 0 0-3 0V11 8.500a1.500 1.500 0 0 0-3 0V11" fill="none" stroke="#fff" stroke-width="1.300"/></svg>Menu</button>
  <button class="launch desk" aria-label="Show desktop"><svg width="22" height="20" viewBox="0 0 22 20"><rect width="22" height="20" rx="1" fill="#87b158"/><path d="M0 0h22v4H0z" fill="#6d9145"/></svg></button>
  <button class="launch" aria-label="Firefox"><svg width="21" height="21" viewBox="0 0 21 21"><rect width="21" height="21" rx="4" fill="#f08c3a"/><path d="M4 8l2-5 3 3c5-1 8 1 8 6 0 4-3 6-6.500 6S4 15 4 11z" fill="#fff"/><circle cx="11" cy="11.500" r="3.200" fill="#f08c3a"/><path d="M6 8l6 1-4 4z" fill="#fff"/></svg></button>
  <button class="launch" aria-label="Terminal"><svg width="21" height="21" viewBox="0 0 21 21"><rect x=".5" y=".5" width="20" height="20" rx="3" fill="#252727" stroke="#111"/><text x="3" y="10" font-size="8" fill="#fff" font-weight="bold">$_</text></svg></button>
  <button class="launch" aria-label="Files"><svg width="22" height="20"><use href="#i-folder"/></svg></button>
  <button class="task on"><svg width="16" height="16"><use href="#i-fc"/></svg>FreeCAD</button>
  <button class="task"><svg width="16" height="16"><use href="#i-folder"/></svg>Pictures</button>
  <div class="pager">
    <button aria-label="Workspace 1"><svg viewBox="0 0 36 20"><rect x="10.500" y="4.500" width="12" height="9" fill="#8f8f8f" stroke="#222"/></svg></button>
    <button aria-label="Workspace 2"><svg viewBox="0 0 36 20"><rect x="5.500" y="1" width="22" height="18" fill="#8f8f8f" stroke="#222"/></svg></button>
    <button aria-label="Workspace 3"><svg viewBox="0 0 36 20"><path d="M0 0h36v20H0z" fill="#8a8a8a"/><rect x="5" y="1" width="23" height="17" fill="#929292" stroke="#555"/></svg></button>
    <button aria-label="Workspace 4"><svg viewBox="0 0 36 20"><path d="M0 0h36v20H0z" fill="#8c8c8c"/></svg></button>
    <button aria-label="Workspace 5"><svg viewBox="0 0 36 20"><rect x="10.500" y="4.500" width="13" height="10" fill="#8f8f8f" stroke="#222"/><rect x="23.500" y="4.500" width="4" height="10" fill="#8f8f8f" stroke="#222"/></svg></button>
    <button class="current" aria-label="Workspace 6"></button>
  </div>
  <div class="tray">
    <svg class="wide" width="20" height="20" viewBox="0 0 20 20"><path d="M5 2h10l4 8-4 8H5l-4-8z" fill="#201008" stroke="#ff8a00" stroke-width="2"/><path d="M5 4l10 12M15 4L5 16" stroke="#ff9d00" stroke-width="2"/></svg>
    <svg width="16" height="18" viewBox="0 0 16 18"><path d="M8 0c2 2 5 3 8 3-1 7-3 12-8 15C3 15 1 10 0 3c3 0 6-1 8-3z" fill="#e6e6e6" stroke="#888"/><circle cx="8" cy="8" r="5" fill="#3d6fae"/><path d="M8 5v1.500M8 7.500V12" stroke="#fff" stroke-width="1.600"/></svg>
    <svg width="10" height="16" viewBox="0 0 10 16"><rect width="10" height="16" rx="5" fill="#d0dae2"/><path d="M2 5l5.500 5.500L5 13V3l2.500 2.500L2 11" fill="none" stroke="#333" stroke-width="1.200"/></svg>
    <svg width="14" height="15" viewBox="0 0 14 15"><path d="M0 0h14v15H0z" fill="#0aa095"/><path d="M1.500 7.500h4M8.500 7.500h4M3 3l3 3.500M11 3L8 6.500M3 12l3-3.500M11 12L8 8.500" stroke="#fff" stroke-width="1.800"/></svg>
    <svg width="12" height="15" viewBox="0 0 12 15"><rect x="1" y="1" width="10" height="13" rx="1" fill="#333" stroke="#ccc" stroke-width="1.800"/><path d="M4 9a2.500 2.500 0 1 1 3 0M6 7l3 5" stroke="#ccc" stroke-width="1.600" fill="none"/></svg>
    <svg width="12" height="14" viewBox="0 0 12 14"><circle cx="6" cy="4" r="3.500" fill="#ccc"/><path d="M1 13c0-4 2-5 5-5s5 1 5 5z" fill="#ccc"/></svg>
    <svg width="14" height="14" viewBox="0 0 14 14"><path d="M5 0h4v4H5zM0 9h5v5H0zM9 9h5v5H9z" fill="#ccc"/><path d="M7 4v3M2.500 9V7h9v2" fill="none" stroke="#ccc"/></svg>
    <svg width="14" height="14" viewBox="0 0 14 14"><path d="M0 5h3l3-4v12L3 9H0z" fill="#ccc"/><path d="M8 4c1.500 2 1.500 4 0 6M10 2.500c2.500 3 2.500 6 0 9M12 1c3 4 3 8 0 12" fill="none" stroke="#ccc" stroke-width="1.100"/></svg>
    <svg width="12" height="15" viewBox="0 0 12 15"><path d="M3.500 0h5v2h-5z" fill="#ccc"/><rect x="1" y="2" width="10" height="12" rx="1" fill="none" stroke="#ccc" stroke-width="1.600"/><path d="M3 7.500h6M3 10h6M3 12h6" stroke="#ccc" stroke-width="1.500"/></svg>
    <time class="clock">Fri Feb  8, 05:21:32 PM</time>
  </div>
</nav>
</body>
</html>
```
FILE: styles.css
```css
* { box-sizing: border-box; }

html, body { height: 100%; }

body {
  margin: 0;
  display: flex;
  flex-direction: column;
  background: #efebe7;
  color: #111;
  font: 16px/20px "DejaVu Sans", sans-serif;
  overflow: hidden;
}

button {
  font: inherit;
  color: inherit;
  background: none;
  border: 0;
  padding: 0;
  margin: 0;
}

h1, h2, ul { margin: 0; padding: 0; font: inherit; list-style: none; }
svg { display: block; flex: none; }
.sprite { position: absolute; width: 0; height: 0; }

.window { flex: 1; min-height: 0; display: flex; flex-direction: column; }

/* title bar */
.titlebar {
  display: grid;
  grid-template-columns: 1fr auto 1fr;
  align-items: center;
  height: 27px;
  background: #d9d9d9;
  border-top: 1px solid #383438;
}
.title {
  grid-column: 2;
  font: bold 13px/18px "Noto Sans", sans-serif;
  color: #7b7b7b;
}
.winctl { display: flex; justify-content: flex-end; align-items: center; gap: 17px; padding: 0 8px 2px 0; }

/* menus */
.menubar {
  display: flex;
  gap: 15px;
  height: 24px;
  padding: 0 10px;
  border-bottom: 1px solid #d2ceca;
}
.menubar button { line-height: 22px; }
.menubar u { text-underline-offset: 3px; text-decoration-thickness: 1px; }

/* toolbars */
.toolrow {
  display: flex;
  gap: 4px;
  height: 38px;
  background: linear-gradient(#f7f4f0, #eeebe6);
  border-bottom: 1px solid #b2aeaa;
}
.toolrow.second { height: 39px; padding-top: 1px; }
.toolbar { display: flex; align-items: center; }
.handle {
  width: 12px;
  height: 18px;
  padding: 0 4px;
  background: radial-gradient(circle at 1px 1px, #b5b0aa 1px, transparent 1px) 5px 0 / 3px 3px content-box;
  background-clip: content-box;
}
.sep { width: 7px; height: 18px; display: flex; justify-content: center; }
.sep::before { content: ""; width: 1px; background: #cfcbc6; border-right: 1px solid #fff; box-sizing: content-box; }
.tool { width: 33px; height: 33px; display: flex; align-items: center; justify-content: center; }
.tool svg { width: 24px; height: 24px; }
.tool.drop { width: 45px; gap: 5px; }
.arrow {
  border: 5px solid transparent;
  border-top-color: #45423f;
  border-bottom: 0;
}
:disabled .arrow { border-top-color: #bcb9b5; }

.combo {
  display: flex;
  align-items: center;
  width: 214px;
  height: 27px;
  padding: 0 6px;
  border: 1px solid #a8a49f;
  border-radius: 3px;
  background: linear-gradient(#fff, #f0eeeb);
}
.combo-icon { width: 16px; height: 16px; }
.combo select {
  flex: 1;
  appearance: none;
  border: 0;
  background: none;
  font: inherit;
  color: inherit;
  padding: 1px 4px 0;
}
.combo .arrow { border-width: 4px 4px 0; border-top-color: #5a5754; }

/* work area */
.work { flex: 1; min-height: 0; display: flex; padding-top: 1px; }
.dock { flex: 0 0 598px; display: flex; flex-direction: column; }
.dock-title { display: flex; align-items: center; gap: 2px; height: 21px; padding: 0 2px 0 4px; }
.dock-title h2 { flex: 1; }

.tabs { display: flex; }
.tabs.top { height: 29px; align-items: flex-end; }
.tab {
  height: 27px;
  padding: 0 12px;
  border: 1px solid #b4b0ac;
  background: #e9e5e2;
}
.tabs.top .tab { border-bottom: 0; border-radius: 3px 3px 0 0; }
.tabs.top .tab.on { height: 30px; margin-bottom: -1px; background: linear-gradient(#fff, #fdfaf7); }
.tabs.top .tab + .tab { margin-left: -1px; padding-top: 2px; }

.pane {
  flex: 1;
  min-height: 0;
  display: flex;
  flex-direction: column;
  border: 1px solid #a9a5a1;
  padding: 1px 1px 0;
  background: #fcf9f6;
}

.tree { flex: 0 0 290px; border: 1px solid #a9a5a1; background: #fff; overflow: hidden; }
.tree-head { background: #efebe7; height: 23px; }
.tree-head span {
  display: block;
  width: 212px;
  height: 23px;
  padding-left: 2px;
  line-height: 24px;
  background: linear-gradient(#fcfaf8, #eae7e4);
  border-bottom: 1px solid #a9a5a1;
}
.tree ul { width: 212px; }
.tree li { display: flex; align-items: center; gap: 4px; height: 21px; white-space: nowrap; }
.tree li.root { height: 19px; padding-left: 3px; }
.tree li svg { width: 16px; height: 16px; }
.tree .l0 { padding-left: 1px; }
.tree .l1 { padding-left: 21px; }
.tree .l2 { padding-left: 41px; }
.tree .l3 { padding-left: 61px; }
.strong { font-weight: bold; }
.dim { color: #bfbdbb; }
.dim svg { color: #8d8b89; }
.selected { background: #308cc6; color: #fff; }
.selected svg { color: #8c3b50; }

.tw { width: 17px; height: 10px; display: flex; align-items: center; justify-content: center; }
.tree .tw { margin-right: 4px; }
.tree li .tw { margin-right: 3px; }
.tw::before { content: ""; border: 5px solid transparent; border-left-color: #45423f; border-right: 0; }
.tw.open::before { border: 5px solid transparent; border-top-color: #45423f; border-bottom: 0; }
.tw.none::before { display: none; }

.hsplit, .vsplit { display: flex; align-items: center; justify-content: center; }
.hsplit { height: 4px; }
.vsplit { width: 6px; }
.hsplit::before, .vsplit::before {
  content: "";
  width: 17px;
  height: 2px;
  background: radial-gradient(circle at 1px 1px, #b5b0aa 1px, transparent 1px) 0 0 / 3px 3px;
}
.vsplit::before { width: 2px; height: 17px; }

.props { flex: 1; min-height: 0; border: 1px solid #a9a5a1; padding: 1px; display: flex; background: #fcf9f6; }
.props-box { flex: 1; min-width: 0; border: 1px solid #a9a5a1; background: #fff; overflow: hidden; }
.props table { width: 100%; table-layout: fixed; border-collapse: separate; border-spacing: 0; }
.props .c1 { width: 100px; }
.props th, .props td {
  height: 24px;
  padding: 0;
  font-weight: normal;
  text-align: left;
  line-height: 23px;
  white-space: pre;
  overflow: hidden;
}
.props thead th {
  height: 24px;
  padding-left: 2px;
  background: linear-gradient(#fcfaf8, #ebe8e5);
  border-bottom: 1px solid #b4b0ac;
}
.props thead th:first-child { border-right: 1px solid #c4c0bc; }
.props tbody th { position: relative; border-right: 1px solid #bdbbb8; }
.props tbody td { border-bottom: 1px solid #bdbbb8; border-right: 1px solid #bdbbb8; padding-left: 3px; }
.props tbody th span, .props tbody th label {
  display: block;
  height: 24px;
  padding-left: 3px;
  border-bottom: 1px solid #bdbbb8;
}
.p0 span { margin-left: 20px; }
.p1 span { margin-left: 40px; }
.p2 span, .p2 label { margin-left: 60px; }
.props .tw { position: absolute; top: 7px; left: 1px; }
.props .p1 .tw { left: 21px; }
.alt { background: #f6f5f3; }
.group { background: #9e9c97; color: #fff; }
.props .group th { font-weight: bold; border-right: 0; }
.picked th { background: #308cc6; color: #fff; }
.props .picked td { padding: 0; border: 0; background: #efebe7; }
.spin { display: flex; align-items: center; height: 24px; }
.spin input {
  flex: 1;
  min-width: 0;
  height: 24px;
  padding: 0 0 0 2px;
  border: 0;
  background: none;
  font: inherit;
  color: #c3bfbb;
}
.spin svg { margin: 0 4px 6px 0; }
.updown { display: flex; flex-direction: column; gap: 8px; width: 12px; height: 24px; align-items: center; justify-content: center; border-left: 1px solid #a9a5a1; }
.updown i { border: 4px solid transparent; border-bottom-color: #ddd9d5; border-top: 0; }
.updown i + i { border: 4px solid transparent; border-top-color: #ddd9d5; border-bottom: 0; }

.tabs.bottom { height: 29px; align-items: flex-start; }
.tabs.bottom .tab { border-top: 0; border-radius: 0 0 3px 3px; }
.tabs.bottom .tab.on { height: 28px; margin-left: -1px; background: #fff; }

/* document area */
.mdi { flex: 1; min-width: 0; display: flex; flex-direction: column; }
.scene { flex: 1; min-height: 0; width: 100%; }
.axis { font: 10px "Liberation Sans", sans-serif; fill: #111; }
.mdi-tabs { height: 31px; padding-top: 1px; display: flex; align-items: flex-start; background: linear-gradient(#efebe7 1px, #b4b0ac 1px, #b4b0ac 2px, #efebe7 2px); }
.mdi-tab {
  display: flex;
  align-items: center;
  gap: 5px;
  height: 30px;
  padding: 2px 16px 0 11px;
  border: 1px solid #aaa6a2;
  border-top: 0;
  border-radius: 0 0 3px 3px;
  background: linear-gradient(#efebe7, #f8f4f0);
}

.status {
  display: flex;
  align-items: center;
  justify-content: space-between;
  height: 33px;
  padding: 3px 131px 0 6px;
  border-bottom: 2px solid #aaa7a3;
}
.nav { display: flex; align-items: center; gap: 5px; }
.nav .arrow { border-width: 3px 3px 0; }

/* desktop panel */
.taskbar {
  display: flex;
  align-items: center;
  height: 28px;
  padding: 1px 3px 0 4px;
  background: linear-gradient(#434546, #303030);
  color: #dcdcdc;
  font: 12px/16px "Noto Sans", sans-serif;
}
.mint { display: flex; align-items: center; gap: 5px; margin-right: 11px; }
.launch { margin-right: 5px; }
.launch.desk { margin-right: 11px; }
.task {
  display: flex;
  align-items: center;
  gap: 5px;
  width: 162px;
  height: 27px;
  padding-left: 6px;
  margin-left: 3px;
  border: 1px solid #4a4b4b;
  border-radius: 3px;
  background: linear-gradient(#484949, #353535);
}
.task.on { background: linear-gradient(#858686, #525353); border-color: #737474; }
.pager { display: flex; gap: 2px; margin-left: auto; }
.pager button { width: 38px; height: 21px; border: 1px solid #5f5f5f; background: linear-gradient(#222, #444); }
.pager svg { width: 36px; height: 19px; }
.pager .current { background: #fff; border-color: #ccc; }
.tray { display: flex; align-items: center; gap: 7px; padding-left: 5px; }
.tray .wide { margin-right: 2px; }
.clock { font-weight: bold; white-space: pre; padding-left: 1px; }
```
